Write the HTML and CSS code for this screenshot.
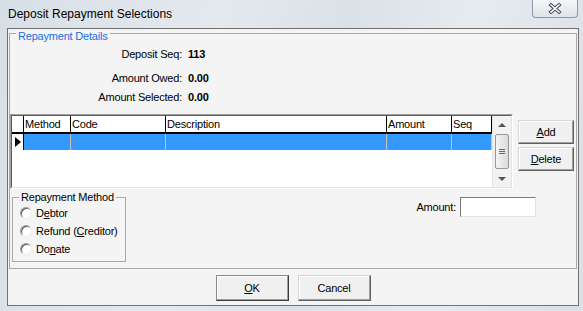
FILE: index.html
```html
<!DOCTYPE html>
<html lang="en">

<head>
   <meta charset="UTF-8">
   <meta name="viewport" content="width=device-width, initial-scale=1.0">
   <title>Deposit Repayment Selections</title>
   <link rel="stylesheet" href="styles.css">
</head>

<body>
   <div class="window">
      <div class="titlebar">
         <span class="title">Deposit Repayment Selections</span>
         <button class="close">
            <svg width="14" height="11" viewBox="0 0 14 11">
               <path d="M3 2 L11 9 M11 2 L3 9" stroke="#3f4954" stroke-width="3.6" stroke-linecap="square" fill="none" />
               <path d="M3 2 L11 9 M11 2 L3 9" stroke="#ffffff" stroke-width="1.6" stroke-linecap="square" fill="none" />
            </svg>
         </button>
      </div>

      <div class="client">
         <div class="group details">
            <div class="group-title blue">Repayment Details</div>

            <div class="info">
               <div class="info-row"><span class="lbl">Deposit Seq:</span><b>113</b></div>
               <div class="info-row owed"><span class="lbl">Amount Owed:</span><b>0.00</b></div>
               <div class="info-row selected"><span class="lbl">Amount Selected:</span><b>0.00</b></div>
            </div>

            <div class="grid-row">
               <div class="grid">
                  <div class="grid-inner">
                     <div class="table">
                        <div class="tr head">
                           <div class="cell ind"></div>
                           <div class="cell">Method</div>
                           <div class="cell">Code</div>
                           <div class="cell">Description</div>
                           <div class="cell">Amount</div>
                           <div class="cell">Seq</div>
                        </div>
                        <div class="tr sel">
                           <div class="cell ind"><span class="arrow"></span></div>
                           <div class="cell"></div>
                           <div class="cell"></div>
                           <div class="cell"></div>
                           <div class="cell"></div>
                           <div class="cell"></div>
                        </div>
                     </div>
                     <div class="vscroll">
                        <div class="sb-btn"><span class="tri-up"></span></div>
                        <div class="thumb"><span></span><span></span><span></span></div>
                        <div class="sb-space"></div>
                        <div class="sb-btn"><span class="tri-down"></span></div>
                     </div>
                  </div>
               </div>
               <div class="side-buttons">
                  <button class="btn"><u>A</u>dd</button>
                  <button class="btn"><u>D</u>elete</button>
               </div>
            </div>

            <div class="bottom-row">
               <div class="group method">
                  <div class="group-title">Repayment Method</div>
                  <label class="radio"><span class="dot"></span>D<u>e</u>btor</label>
                  <label class="radio"><span class="dot"></span>Refund (<u>C</u>reditor)</label>
                  <label class="radio"><span class="dot"></span>Do<u>n</u>ate</label>
               </div>
               <div class="amount">
                  <span>Amount:</span>
                  <span class="input"></span>
               </div>
            </div>
         </div>

         <div class="actions">
            <button class="btn big ok"><u>O</u>K</button>
            <button class="btn big">Cancel</button>
         </div>
      </div>
   </div>
</body>

</html>
```

FILE: styles.css
```css
body {
   margin: 0;
   font-family: 'Liberation Sans', Arial, sans-serif;
   font-size: 11px;
   letter-spacing: -0.2px;
   color: #000;
   background-color: #dbe3e9;
}

.window {
   width: 583px;
   height: 311px;
   overflow: hidden;
   background: linear-gradient(100deg, #d7dfe6 0%, #e4e9ee 35%, #dae1e7 55%, #e6ebef 75%, #d9e0e6 100%);
}

.titlebar {
   height: 28px;
   display: flex;
   justify-content: space-between;
   align-items: flex-start;
}

.title {
   font-size: 12px;
   letter-spacing: 0;
   line-height: 14px;
   margin: 7px 0 0 8px;
}

.close {
   width: 46px;
   height: 18px;
   margin-right: 5px;
   padding: 0;
   border: 1px solid #8e98a2;
   border-top: none;
   border-radius: 0 0 4px 4px;
   background: linear-gradient(#f5f7f9, #dfe4e9);
   display: flex;
   justify-content: center;
   align-items: center;
}

.client {
   box-sizing: border-box;
   width: 572px;
   height: 278px;
   margin-left: 7px;
   padding: 4px 1px 0 1px;
   border: 1px solid #707070;
   background-color: #f4f4f4;
}

.group {
   box-sizing: border-box;
   border: 1px solid #a8a8a8;
}

.group-title {
   display: table;
   line-height: 13px;
   padding: 0 2px;
   background-color: #f4f4f4;
}

.blue {
   color: #1b6fe0;
}

.details {
   width: 568px;
   height: 236px;
}

.details .group-title {
   margin: -4px 0 0 6px;
}

/* info labels */
.info {
   margin-top: 5px;
}

.info-row {
   display: grid;
   grid-template-columns: 172px auto;
   column-gap: 6px;
   line-height: 13px;
}

.info-row .lbl {
   text-align: right;
}

.info-row.owed {
   margin-top: 11px;
}

.info-row.selected {
   margin-top: 6px;
}

/* grid */
.grid-row {
   display: flex;
   gap: 5px;
   margin-top: 10px;
}

.grid {
   box-sizing: border-box;
   width: 503px;
   height: 75px;
   border: 1px solid;
   border-color: #a0a0a0 #ffffff #ffffff #a0a0a0;
}

.grid-inner {
   box-sizing: border-box;
   height: 100%;
   display: flex;
   border: 1px solid;
   border-color: #5a5a5a #e3e3e3 #e3e3e3 #5a5a5a;
   background-color: #fff;
}

.table {
   width: 480px;
   flex: none;
}

.tr {
   display: grid;
   grid-template-columns: 12px 47px 95px 221px 65px 40px;
}

.cell {
   box-sizing: border-box;
   border-right: 1px solid #000;
   padding-left: 1px;
   overflow: hidden;
   white-space: nowrap;
}

.head {
   box-sizing: border-box;
   height: 18px;
   border-bottom: 2px solid #000;
   line-height: 16px;
}

.sel {
   height: 16px;
}

.sel .cell {
   background-color: #3399ff;
   border-right-color: #c4c4c4;
}

.sel .cell.ind {
   background-color: #fff;
   border-right-color: #000;
   display: flex;
   justify-content: center;
   align-items: center;
   padding: 0;
}

.arrow {
   width: 0;
   height: 0;
   border-left: 6px solid #000;
   border-top: 5px solid transparent;
   border-bottom: 5px solid transparent;
}

/* scrollbar */
.vscroll {
   flex: 1;
   display: flex;
   flex-direction: column;
   align-items: center;
   background-color: #f2f2f2;
   border-left: 1px solid #e6e6e6;
}

.sb-btn {
   height: 17px;
   width: 100%;
   display: flex;
   justify-content: center;
   align-items: center;
}

.tri-up,
.tri-down {
   width: 0;
   height: 0;
   border-left: 4px solid transparent;
   border-right: 4px solid transparent;
}

.tri-up {
   border-bottom: 4px solid #555;
}

.tri-down {
   border-top: 4px solid #555;
}

.thumb {
   box-sizing: border-box;
   width: 14px;
   height: 35px;
   margin-top: 1px;
   border: 1px solid #979797;
   border-radius: 2px;
   background: linear-gradient(90deg, #f4f4f4, #dcdcdc);
   display: flex;
   flex-direction: column;
   justify-content: center;
   align-items: center;
   gap: 1px;
}

.thumb span {
   width: 6px;
   height: 1px;
   background-color: #6a6a6a;
}

.sb-space {
   flex: 1;
}

/* buttons */
.btn {
   box-sizing: border-box;
   font-family: 'Liberation Sans', Arial, sans-serif;
   font-size: 11px;
   letter-spacing: -0.2px;
   color: #000;
   padding: 0;
   background-color: #f0f0f0;
   border: 1px solid;
   border-color: #d6d6d6 #5f5f5f #5f5f5f #d6d6d6;
   box-shadow: inset -1px -1px #a0a0a0, inset 1px 1px #ffffff;
}

.side-buttons {
   display: flex;
   flex-direction: column;
   gap: 3px;
   margin-top: 6px;
}

.side-buttons .btn {
   width: 56px;
   height: 24px;
}

/* lower part */
.bottom-row {
   display: flex;
   align-items: flex-start;
   margin-top: 8px;
}

.method {
   width: 114px;
   height: 65px;
   margin-left: 2px;
}

.method .group-title {
   margin: -7px 0 0 6px;
}

.radio {
   display: flex;
   align-items: center;
   height: 18px;
}

.dot {
   box-sizing: border-box;
   width: 12px;
   height: 12px;
   margin: 0 4px 0 7px;
   border-radius: 50%;
   border: 1px solid;
   border-color: #9c9c9c #eeeeee #eeeeee #9c9c9c;
   box-shadow: inset 1px 1px #5c5c5c;
   background-color: #fff;
}

.amount {
   display: flex;
   align-items: center;
   gap: 4px;
   margin-left: auto;
   margin-right: 40px;
}

.input {
   box-sizing: border-box;
   width: 76px;
   height: 20px;
   border: 1px solid;
   border-color: #7a7a7a #e3e3e3 #e3e3e3 #7a7a7a;
   background-color: #fff;
}

.actions {
   display: flex;
   justify-content: center;
   gap: 9px;
   margin-top: 6px;
}

.big {
   width: 73px;
   height: 26px;
}

.ok {
   border-color: #8a8a8a #3c3c3c #3c3c3c #8a8a8a;
}
```
